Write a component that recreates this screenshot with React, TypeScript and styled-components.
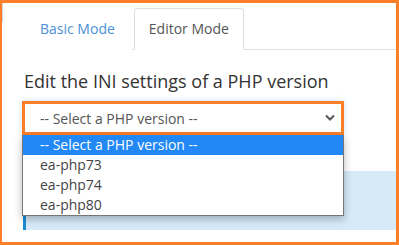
import styled, { createGlobalStyle } from 'styled-components'

const GlobalStyle = createGlobalStyle`
  html, body {
    margin: 0;
    padding: 0;
    background: #ffffff;
  }
  body {
    font-family: 'Open Sans', 'Liberation Sans', sans-serif;
    color: #333333;
  }
`

const ORANGE = '#fb7f28'

const Frame = styled.div`
  position: relative;
  box-sizing: border-box;
  width: 399px;
  height: 245px;
  border: 3px solid ${ORANGE};
  border-left-width: 2px;
  overflow: hidden;
  background: #ffffff;
`

const EdgeMark = styled.div`
  position: absolute;
  left: 0;
  top: 0;
  width: 1px;
  height: 19px;
  background: #d4d4d4;
`

const Content = styled.div`
  padding: 5px 0 0 21px;
`

const Tabs = styled.ul`
  display: flex;
  margin: 0;
  padding: 0;
  list-style: none;
  border-bottom: 1px solid #dddddd;
`

const Tab = styled.li<{ $active?: boolean }>`
  box-sizing: border-box;
  display: flex;
  align-items: center;
  height: 42px;
  margin: 0 2px -1px 0;
  padding: 0 ${(p) => (p.$active ? '14px' : '16px')} 1px;
  font-size: 14px;
  color: ${(p) => (p.$active ? '#555555' : '#4a8fd8')};
  background: #ffffff;
  border: 1px solid ${(p) => (p.$active ? '#dddddd' : 'transparent')};
  border-bottom-color: transparent;
  border-radius: 4px 4px 0 0;
`

const Heading = styled.h3`
  margin: 18px 0 0 1px;
  font-size: 18px;
  font-weight: 400;
  line-height: 26px;
  color: #333333;
`

const SelectArea = styled.div`
  position: relative;
  margin-top: 7px;
`

const SelectBox = styled.div`
  box-sizing: border-box;
  display: flex;
  align-items: center;
  justify-content: space-between;
  width: 322px;
  height: 34px;
  margin-left: -1px;
  padding: 0 6px 0 15px;
  border: 3px solid ${ORANGE};
  font-size: 14px;
  color: #555555;
  box-shadow: 0 0 6px rgba(102, 175, 233, 0.35);
`

const Chevron = styled.svg`
  width: 10px;
  height: 8px;
  margin-bottom: 1px;
`

const Dropdown = styled.ul`
  position: absolute;
  top: 34px;
  left: -1px;
  z-index: 2;
  box-sizing: border-box;
  width: 322px;
  margin: 0;
  padding: 0;
  list-style: none;
  background: #ffffff;
  border: 1px solid #767676;
  border-top: none;
  box-shadow: 0 3px 8px rgba(0, 0, 0, 0.28);
`

const Option = styled.li<{ $selected?: boolean }>`
  height: 20px;
  padding-left: 17px;
  font-size: 14px;
  line-height: 20px;
  color: ${(p) => (p.$selected ? '#ffffff' : '#444444')};
  background: ${(p) => (p.$selected ? '#2188f5' : 'transparent')};
`

const InfoBox = styled.div`
  height: 59px;
  margin-top: 36px;
  background: #d6eaf8;
  border-left: 3px solid #1a8bd3;
`

const options = ['-- Select a PHP version --', 'ea-php73', 'ea-php74', 'ea-php80']

export default function App() {
  return (
    <>
      <GlobalStyle />
      <Frame>
        <EdgeMark />
        <Content>
          <Tabs>
            <Tab>Basic Mode</Tab>
            <Tab $active>Editor Mode</Tab>
          </Tabs>
          <Heading>Edit the INI settings of a PHP version</Heading>
          <SelectArea>
            <SelectBox>
              <span>-- Select a PHP version --</span>
              <Chevron viewBox="0 0 10 8">
                <path d="M1 1.5 L5 5.5 L9 1.5" fill="none" stroke="#555" strokeWidth="2" />
              </Chevron>
            </SelectBox>
            <Dropdown>
              {options.map((o, i) => (
                <Option key={o} $selected={i === 0}>
                  {o}
                </Option>
              ))}
            </Dropdown>
          </SelectArea>
          <InfoBox />
        </Content>
      </Frame>
    </>
  )
}
